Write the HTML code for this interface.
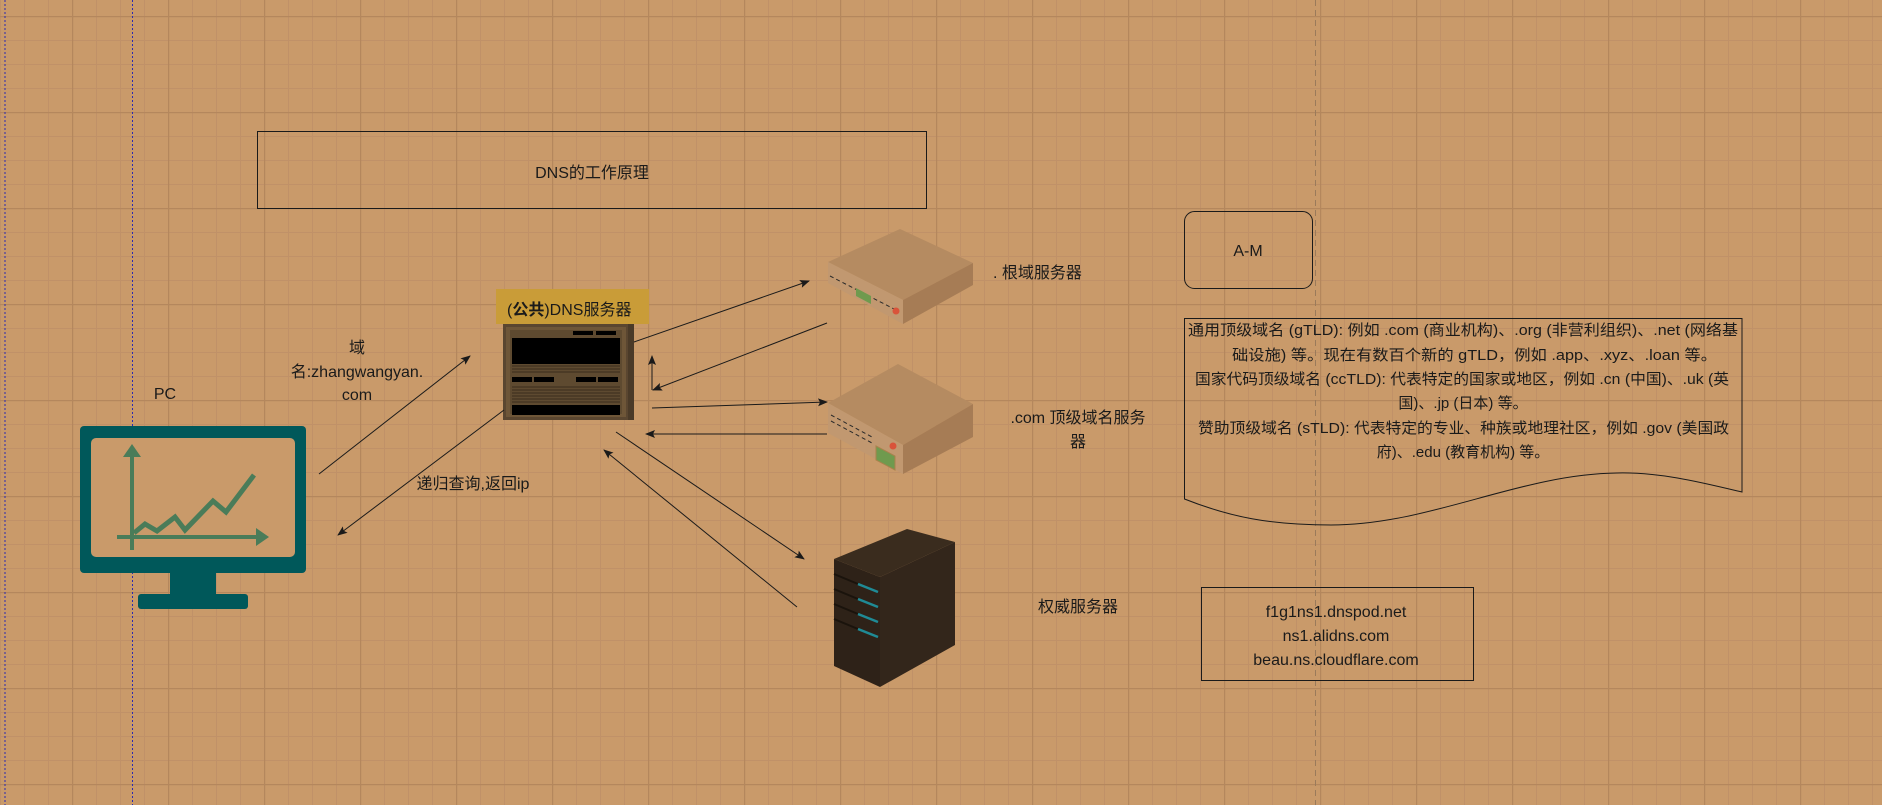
<!DOCTYPE html>
<html><head><meta charset="utf-8"><style>
html,body{margin:0;padding:0;width:1882px;height:805px;overflow:hidden;background:#c99a6a}
svg{display:block}
text{font-family:"Liberation Sans","Noto Sans CJK SC",sans-serif;fill:#1a1a1a;font-size:16px}
</style></head><body>
<svg width="1882" height="805" viewBox="0 0 1882 805" xmlns="http://www.w3.org/2000/svg">
<defs>
<pattern id="minor" x="0" y="16" width="24" height="24" patternUnits="userSpaceOnUse">
<path d="M0 0.5H24M0.5 0V24" stroke="#c09168" stroke-width="1" fill="none"/>
</pattern>
<pattern id="major" x="72" y="16" width="96" height="96" patternUnits="userSpaceOnUse">
<path d="M0 0.5H96M0.5 0V96" stroke="#b4875d" stroke-width="1.5" fill="none"/>
</pattern>
<marker id="ah" markerWidth="10" markerHeight="10" refX="9" refY="5" orient="auto" markerUnits="userSpaceOnUse">
<path d="M0 1L10 5L0 9L2 5Z" fill="#1a1a1a"/>
</marker>
</defs>
<rect width="1882" height="805" fill="#c99a6a"/>
<rect width="1882" height="805" fill="url(#minor)"/>
<rect width="1882" height="805" fill="url(#major)"/>
<line x1="5" y1="0" x2="5" y2="805" stroke="#2a2ab0" stroke-dasharray="2,2"/>
<line x1="132.5" y1="0" x2="132.5" y2="805" stroke="#2a2ab0" stroke-dasharray="2,2"/>
<line x1="1315.5" y1="0" x2="1315.5" y2="805" stroke="#9a7a5a" stroke-dasharray="6,4"/>

<rect x="257.5" y="131.5" width="669" height="77" fill="none" stroke="#1a1a1a"/>
<text x="592" y="178" text-anchor="middle">DNS的工作原理</text>

<rect x="1184.5" y="211.5" width="128" height="77" rx="10" fill="none" stroke="#1a1a1a"/>
<text x="1248" y="256" text-anchor="middle">A-M</text>

<path d="M1184.5 318.5H1742V492C1700 482 1660 472 1617 473C1520 474 1430 525 1331 525C1270 525 1230 517 1184.5 499Z" fill="none" stroke="#1a1a1a"/>
<text x="1188" y="335" textLength="550" lengthAdjust="spacingAndGlyphs" style="font-size:15px">通用顶级域名 (gTLD): 例如 .com (商业机构)、.org (非营利组织)、.net (网络基</text>
<text x="1232" y="360" textLength="485" lengthAdjust="spacingAndGlyphs" style="font-size:15px">础设施) 等。现在有数百个新的 gTLD，例如 .app、.xyz、.loan 等。</text>
<text x="1195" y="384" textLength="534" lengthAdjust="spacingAndGlyphs" style="font-size:15px">国家代码顶级域名 (ccTLD): 代表特定的国家或地区，例如 .cn (中国)、.uk (英</text>
<text x="1463" y="408" text-anchor="middle" style="font-size:15px">国)、.jp (日本) 等。</text>
<text x="1198" y="433" textLength="531" lengthAdjust="spacingAndGlyphs" style="font-size:15px">赞助顶级域名 (sTLD): 代表特定的专业、种族或地理社区，例如 .gov (美国政</text>
<text x="1463" y="457" text-anchor="middle" style="font-size:15px">府)、.edu (教育机构) 等。</text>

<rect x="1201.5" y="587.5" width="272" height="93" fill="none" stroke="#1a1a1a"/>
<text x="1336" y="617" text-anchor="middle">f1g1ns1.dnspod.net</text>
<text x="1336" y="641" text-anchor="middle">ns1.alidns.com</text>
<text x="1336" y="665" text-anchor="middle">beau.ns.cloudflare.com</text>

<text x="165" y="399" text-anchor="middle">PC</text>
<text x="357" y="353" text-anchor="middle">域</text>
<text x="357" y="377" text-anchor="middle">名:zhangwangyan.</text>
<text x="357" y="400" text-anchor="middle">com</text>
<text x="473" y="489" text-anchor="middle">递归查询,返回ip</text>
<text x="993" y="278">.  根域服务器</text>
<text x="1078" y="423" text-anchor="middle">.com 顶级域名服务</text>
<text x="1078" y="447" text-anchor="middle">器</text>
<text x="1078" y="612" text-anchor="middle">权威服务器</text>

<rect x="80" y="426" width="226" height="147" rx="4" fill="#00585a"/>
<rect x="91" y="438" width="204" height="119" rx="5" fill="#c99a6a"/>
<rect x="170" y="572" width="46" height="23" fill="#00585a"/>
<rect x="138" y="594" width="110" height="15" rx="3" fill="#00585a"/>
<g stroke="#4a7c59" fill="none" stroke-width="4">
<line x1="132" y1="452" x2="132" y2="550"/>
<line x1="117" y1="537" x2="262" y2="537"/>
<polyline points="134,533 145,524 157,531 175,517 185,530 213,501 226,512 254,475" stroke-width="5"/>
</g>
<path d="M123 457L132 444L141 457Z" fill="#4a7c59"/>
<path d="M256 528L269 537L256 546Z" fill="#4a7c59"/>

<rect x="503" y="324" width="131" height="96" fill="#5a4630"/>
<rect x="628" y="324" width="6" height="96" fill="#4a3a28"/>
<rect x="506" y="327" width="120" height="90" fill="#6e5638"/>
<rect x="510" y="330" width="112" height="84" fill="#5e4a30"/>
<rect x="512" y="338" width="108" height="26" fill="#000"/>
<g stroke="#3a2c1c" stroke-width="1">
<line x1="512" y1="366" x2="620" y2="366"/><line x1="512" y1="369" x2="620" y2="369"/><line x1="512" y1="372" x2="620" y2="372"/>
<line x1="512" y1="387" x2="620" y2="387"/><line x1="512" y1="390" x2="620" y2="390"/><line x1="512" y1="393" x2="620" y2="393"/><line x1="512" y1="396" x2="620" y2="396"/><line x1="512" y1="399" x2="620" y2="399"/><line x1="512" y1="402" x2="620" y2="402"/>
</g>
<rect x="512" y="405" width="108" height="10" fill="#000"/>
<g fill="#000"><rect x="512" y="377" width="20" height="5"/><rect x="534" y="377" width="20" height="5"/><rect x="576" y="377" width="20" height="5"/><rect x="598" y="377" width="20" height="5"/><rect x="573" y="331" width="20" height="4"/><rect x="596" y="331" width="20" height="4"/></g>
<rect x="496" y="289" width="153" height="35" fill="#c99c38"/>
<text x="507" y="315" style="font-size:16px">(<tspan font-weight="bold">公共</tspan>)DNS服务器</text>

<path d="M828 262L900 229L973 263L903 300Z" fill="#b58b61"/>
<path d="M828 262L903 300L903 324L828 283Z" fill="#c19870"/>
<path d="M903 300L973 263L973 285L903 324Z" fill="#a67c55"/>
<line x1="830" y1="276" x2="896" y2="310" stroke="#2a2a2a" stroke-dasharray="4,3"/>
<path d="M856 288L871 296L871 304L856 296Z" fill="#6f9a4e"/>
<circle cx="896" cy="311" r="3.5" fill="#d9533a"/>

<path d="M828 403L898 364L973 404L903 445Z" fill="#b58b61"/>
<path d="M828 403L903 445L903 474L828 433Z" fill="#c19870"/>
<path d="M903 445L973 404L973 437L903 474Z" fill="#a67c55"/>
<line x1="831" y1="415" x2="872" y2="437" stroke="#2a2a2a" stroke-dasharray="4,3"/>
<line x1="831" y1="421" x2="872" y2="443" stroke="#2a2a2a" stroke-dasharray="4,3"/>
<path d="M876 446L895 456L895 470L876 460Z" fill="#6f9a4e" stroke="#a8824c"/>
<circle cx="893" cy="446" r="3.5" fill="#d9533a"/>

<path d="M834 559L907 529L955 542L880 577Z" fill="#3a2c1e"/>
<path d="M834 559L880 577L880 687L834 666Z" fill="#2e2218"/>
<path d="M880 577L955 542L955 645L880 687Z" fill="#33261b"/>
<g stroke="#1a130c" stroke-width="2"><line x1="834" y1="574" x2="858" y2="584"/><line x1="834" y1="589" x2="858" y2="599"/><line x1="834" y1="604" x2="858" y2="614"/><line x1="834" y1="619" x2="858" y2="629"/></g>
<g stroke="#1f8a95" stroke-width="2.5"><line x1="858" y1="584" x2="878" y2="592"/><line x1="858" y1="599" x2="878" y2="607"/><line x1="858" y1="614" x2="878" y2="622"/><line x1="858" y1="629" x2="878" y2="637"/></g>

<g stroke="#1a1a1a" stroke-width="1" fill="none" marker-end="url(#ah)">
<line x1="319" y1="474" x2="470" y2="356"/>
<line x1="504" y1="410" x2="338" y2="535"/>
<line x1="634" y1="342" x2="809" y2="281"/>
<line x1="827" y1="323" x2="653" y2="390"/>
<line x1="652" y1="390" x2="652" y2="356"/>
<line x1="652" y1="408" x2="827" y2="402"/>
<line x1="827" y1="434" x2="646" y2="434"/>
<line x1="616" y1="432" x2="804" y2="559"/>
<line x1="797" y1="607" x2="604" y2="450"/>
</g>
</svg>
</body></html>
